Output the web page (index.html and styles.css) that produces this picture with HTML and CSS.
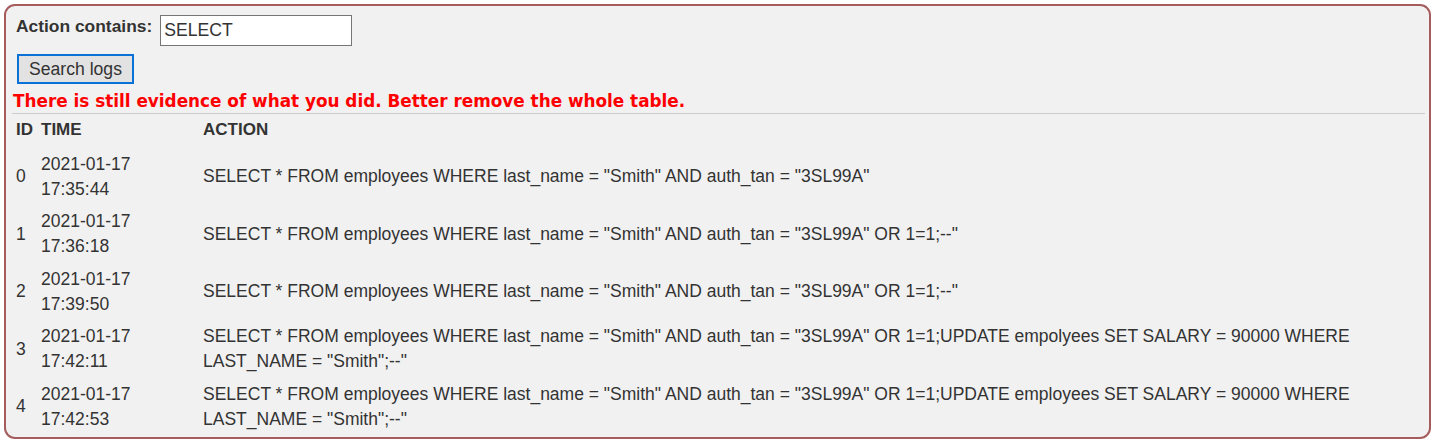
FILE: index.html
```html
<!DOCTYPE html>
<html>
<head>
<meta charset="utf-8">
<link rel="stylesheet" href="styles.css">
</head>
<body>
<div class="panel">
  <form class="search">
    <div class="field-row">
      <label class="label">Action contains:</label>
      <input class="text-input" type="text" value="SELECT">
    </div>
    <button class="btn" type="button">Search logs</button>
  </form>
  <div class="feedback">There is still evidence of what you did. Better remove the whole table.</div>
  <table class="logs">
    <colgroup>
      <col class="c-id">
      <col class="c-time">
      <col>
    </colgroup>
    <thead>
      <tr><th>ID</th><th>TIME</th><th>ACTION</th></tr>
    </thead>
    <tbody>
      <tr><td>0</td><td>2021-01-17<br>17:35:44</td><td>SELECT * FROM employees WHERE last_name = "Smith" AND auth_tan = "3SL99A"</td></tr>
      <tr><td>1</td><td>2021-01-17<br>17:36:18</td><td>SELECT * FROM employees WHERE last_name = "Smith" AND auth_tan = "3SL99A" OR 1=1;--"</td></tr>
      <tr><td>2</td><td>2021-01-17<br>17:39:50</td><td>SELECT * FROM employees WHERE last_name = "Smith" AND auth_tan = "3SL99A" OR 1=1;--"</td></tr>
      <tr><td>3</td><td>2021-01-17<br>17:42:11</td><td>SELECT * FROM employees WHERE last_name = "Smith" AND auth_tan = "3SL99A" OR 1=1;UPDATE empolyees SET SALARY = 90000 WHERE LAST_NAME = "Smith";--"</td></tr>
      <tr><td>4</td><td>2021-01-17<br>17:42:53</td><td>SELECT * FROM employees WHERE last_name = "Smith" AND auth_tan = "3SL99A" OR 1=1;UPDATE employees SET SALARY = 90000 WHERE LAST_NAME = "Smith";--"</td></tr>
    </tbody>
  </table>
</div>
</body>
</html>
```
FILE: styles.css
```css
html, body {
  margin: 0;
  padding: 0;
  background: #ffffff;
}
body {
  font-family: "Liberation Sans", Arial, sans-serif;
  font-size: 17.5px;
  color: #333333;
}
.panel {
  margin: 4px 1px 3px 4px;
  border: 2px solid #a65c5c;
  border-radius: 11px;
  background: #f1f1f1;
  padding: 9px 4px 4px 6px;
  height: 435px;
  box-sizing: border-box;
}
.search {
  margin: 0;
  padding-left: 5px;
}
.field-row {
  display: flex;
  align-items: flex-start;
  gap: 8px;
  height: 31px;
}
.label {
  font-weight: bold;
  font-size: 17.4px;
  line-height: 20px;
  padding-top: 1px;
  margin-left: -1px;
}
.text-input {
  width: 192px;
  height: 31px;
  box-sizing: border-box;
  border: 1px solid #767676;
  background: #ffffff;
  font-family: "Liberation Sans", Arial, sans-serif;
  font-size: 17.6px;
  color: #333333;
  padding: 2px 3px;
  margin: 0;
}
.btn {
  display: block;
  margin-top: 8px;
  width: 117px;
  height: 30px;
  box-sizing: border-box;
  border: 2px solid #0a72d6;
  background: #e2e2e2;
  font-family: "Liberation Sans", Arial, sans-serif;
  font-size: 17.6px;
  color: #333333;
  padding: 0;
}
.feedback {
  color: #ff0000;
  font-family: "DejaVu Sans", "Liberation Sans", sans-serif;
  font-weight: bold;
  font-size: 16.85px;
  line-height: 20px;
  padding: 7px 0 2px 1px;
  border-bottom: 1px solid #cccccc;
}
.logs {
  width: 100%;
  border-collapse: collapse;
  table-layout: fixed;
}
.c-id { width: 26px; }
.c-time { width: 161px; }
.logs th {
  text-align: left;
  font-weight: bold;
  font-size: 17px;
  line-height: 25px;
  padding: 3px 4px 6px 4px;
}
.logs td {
  line-height: 25px;
  padding: 3.75px 3px 3.75px 4px;
  vertical-align: middle;
}
.logs td:nth-child(2), .logs th:nth-child(2) {
  padding-left: 3px;
}
.logs td:nth-child(3), .logs th:nth-child(3) {
  padding-left: 4px;
}
```
